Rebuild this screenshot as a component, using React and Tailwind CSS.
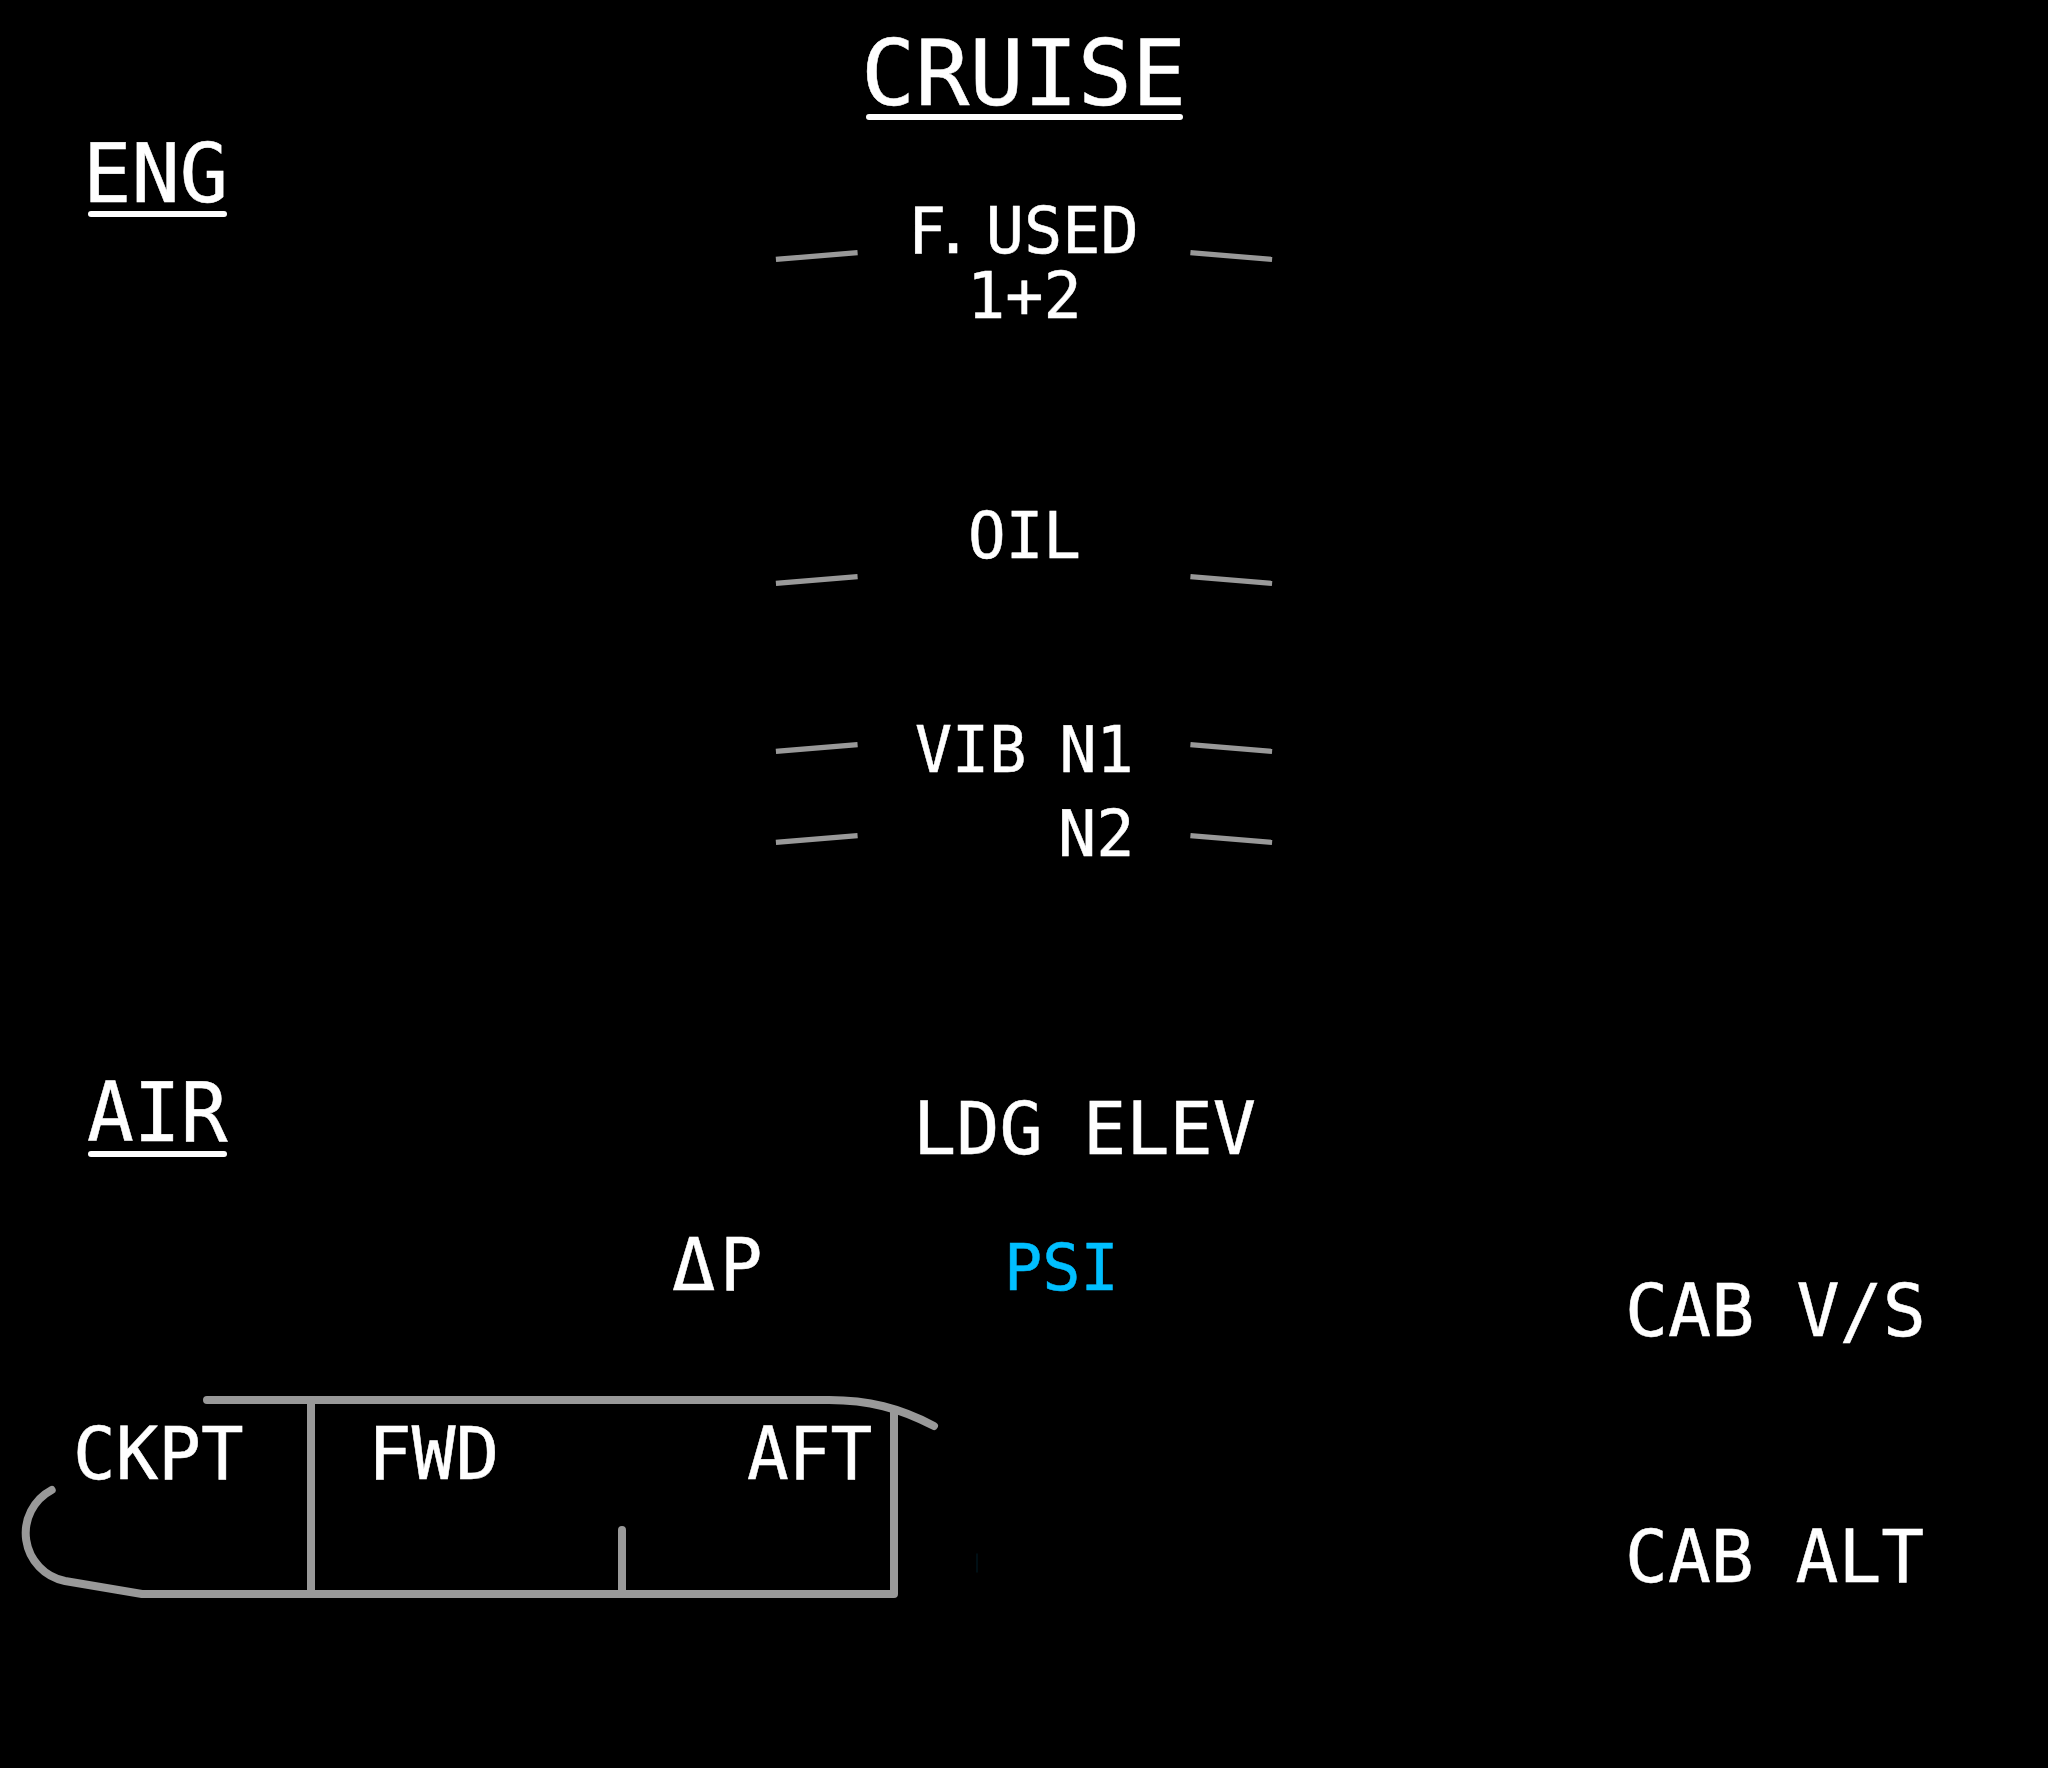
const INK = "whitespace-pre inline-block origin-left [-webkit-text-stroke:0.5px_currentColor]";

function Label({ box, text, children }) {
  return (
    <div className={`shrink-0 ${box}`}>
      <span className={`${INK} ${text}`}>{children}</span>
    </div>
  );
}

function Heading({ box, bar, text, children }) {
  return (
    <div className={`shrink-0 ${box}`}>
      <Label box={bar} text={text}>{children}</Label>
      <div className="h-[6px] rounded-full bg-white" />
    </div>
  );
}

function Tick({ className, flip }) {
  return (
    <svg className={`shrink-0 ${className}`} width="84" height="12" viewBox="0 0 84 12">
      <path d={flip ? "M3 2.8L79.5 9.2" : "M4.5 9.2L81 2.8"} stroke="#999999" strokeWidth="5.2" strokeLinecap="square" />
    </svg>
  );
}

const SMALL = "text-[64.5px] leading-[50px]";
const LARGE = "text-[72.7px] leading-[57px]";

export default function App() {
  return (
    <div className="flex h-[1768px] w-[2048px] flex-col overflow-hidden bg-black font-['DejaVu_Sans_Mono',monospace] text-white">
      <header className="flex h-[142px] pt-[38px] pl-[866px]">
        <Heading box="w-[317px]" bar="h-[76px]" text="text-[90.5px] leading-[71px] scale-x-[0.995] -ml-[5px]">CRUISE</Heading>
      </header>

      <section className="flex h-[939px] pl-[88px]">
        <Heading box="w-[139px]" bar="h-[69px]" text="text-[81.6px] leading-[63px] scale-x-[0.985] -ml-[5px]">ENG</Heading>
        <div className="ml-[547px] flex w-[500px] flex-col pt-[64px]">
          <div className="flex h-[305px] justify-between">
            <Tick className="mt-[44px]" />
            <div>
              <Label box="h-[65px] w-[221px]" text={`${SMALL} scale-x-[0.985] -ml-[6px]`}>
                <span className="tracking-[-12.5px]">F. </span>USED
              </Label>
              <Label box="ml-[60px] h-[48px] w-[104px]" text={`${SMALL} scale-x-[0.985] -ml-[7px]`}>1+2</Label>
            </div>
            <Tick className="mt-[44px]" flip />
          </div>
          <div className="flex h-[214px] justify-between">
            <Tick className="mt-[63px]" />
            <Label box="w-[107px]" text={`${SMALL} scale-x-[0.97] -ml-[3px]`}>OIL</Label>
            <Tick className="mt-[63px]" flip />
          </div>
          <div className="flex h-[84px] justify-between">
            <Tick className="mt-[17px]" />
            <Label box="w-[216px]" text={`${SMALL} scale-x-[0.955] -ml-[1px]`}>
              VIB<span className="tracking-[-4px]"> </span>N1
            </Label>
            <Tick className="mt-[17px]" flip />
          </div>
          <div className="flex justify-between">
            <Tick className="mt-[24px]" />
            <Label box="w-[216px] pl-[146px]" text={`${SMALL} scale-x-[0.985] -ml-[4px]`}>N2</Label>
            <Tick className="mt-[24px]" flip />
          </div>
        </div>
      </section>

      <section className="flex">
        <div className="flex w-[1260px] flex-col">
          <div className="flex h-[156px] pl-[88px]">
            <Heading box="w-[139px]" bar="h-[70px]" text="text-[81.6px] leading-[64px] scale-x-[0.953] -ml-[1px]">AIR</Heading>
            <Label box="ml-[692px] pt-[20px]" text={`${LARGE} scale-x-[0.988] -ml-[6px]`}>
              LDG<span className="tracking-[-3px]"> </span>ELEV
            </Label>
          </div>
          <div className="flex h-[153px] pl-[672px]">
            <Label box="w-[53px]" text={`${LARGE} scale-x-[0.99]`}>Δ</Label>
            <Label box="w-[284px]" text={`${LARGE} scale-x-[0.97] -ml-[5px]`}>P</Label>
            <Label box="pt-[6px] text-[#00bfff]" text={`${SMALL} scale-x-[0.985] -ml-[5px]`}>PSI</Label>
          </div>
          <div className="relative h-[214px] w-[1000px]">
            <svg className="absolute inset-0" width="1000" height="214" viewBox="0 1390 1000 214" fill="none" stroke="#999999" strokeWidth="8" strokeLinecap="round" strokeLinejoin="round">
              <path d="M207 1400H829C868 1400 900 1408 934 1426" />
              <path d="M51.7 1490A48.8 48.8 0 0 0 65 1581L142 1594H894V1410" />
              <path d="M311 1400V1594M622 1530V1594" />
              <path d="M977 1554V1572" stroke="#00141c" strokeWidth="1.5" />
            </svg>
            <div className="relative flex pt-[36px] pl-[76px]">
              <Label box="w-[299px]" text={`${LARGE} scale-x-[0.975] -ml-[3px]`}>CKPT</Label>
              <Label box="w-[373px]" text={`${LARGE} -ml-[7px]`}>FWD</Label>
              <Label box="w-[121px]" text={`${LARGE} scale-x-[0.955] -ml-[1px]`}>AFT</Label>
            </div>
          </div>
        </div>
        <div className="flex flex-col pt-[202px] pl-[369px]">
          <Label box="h-[246px]" text={`${LARGE} scale-x-[0.985] -ml-[4px]`}>
            CAB<span className="tracking-[-1px]"> </span>V/S
          </Label>
          <Label box="h-[54px]" text={`${LARGE} scale-x-[0.98] -ml-[4px]`}>
            CAB<span className="tracking-[-1px]"> </span>ALT
          </Label>
        </div>
      </section>
    </div>
  );
}
